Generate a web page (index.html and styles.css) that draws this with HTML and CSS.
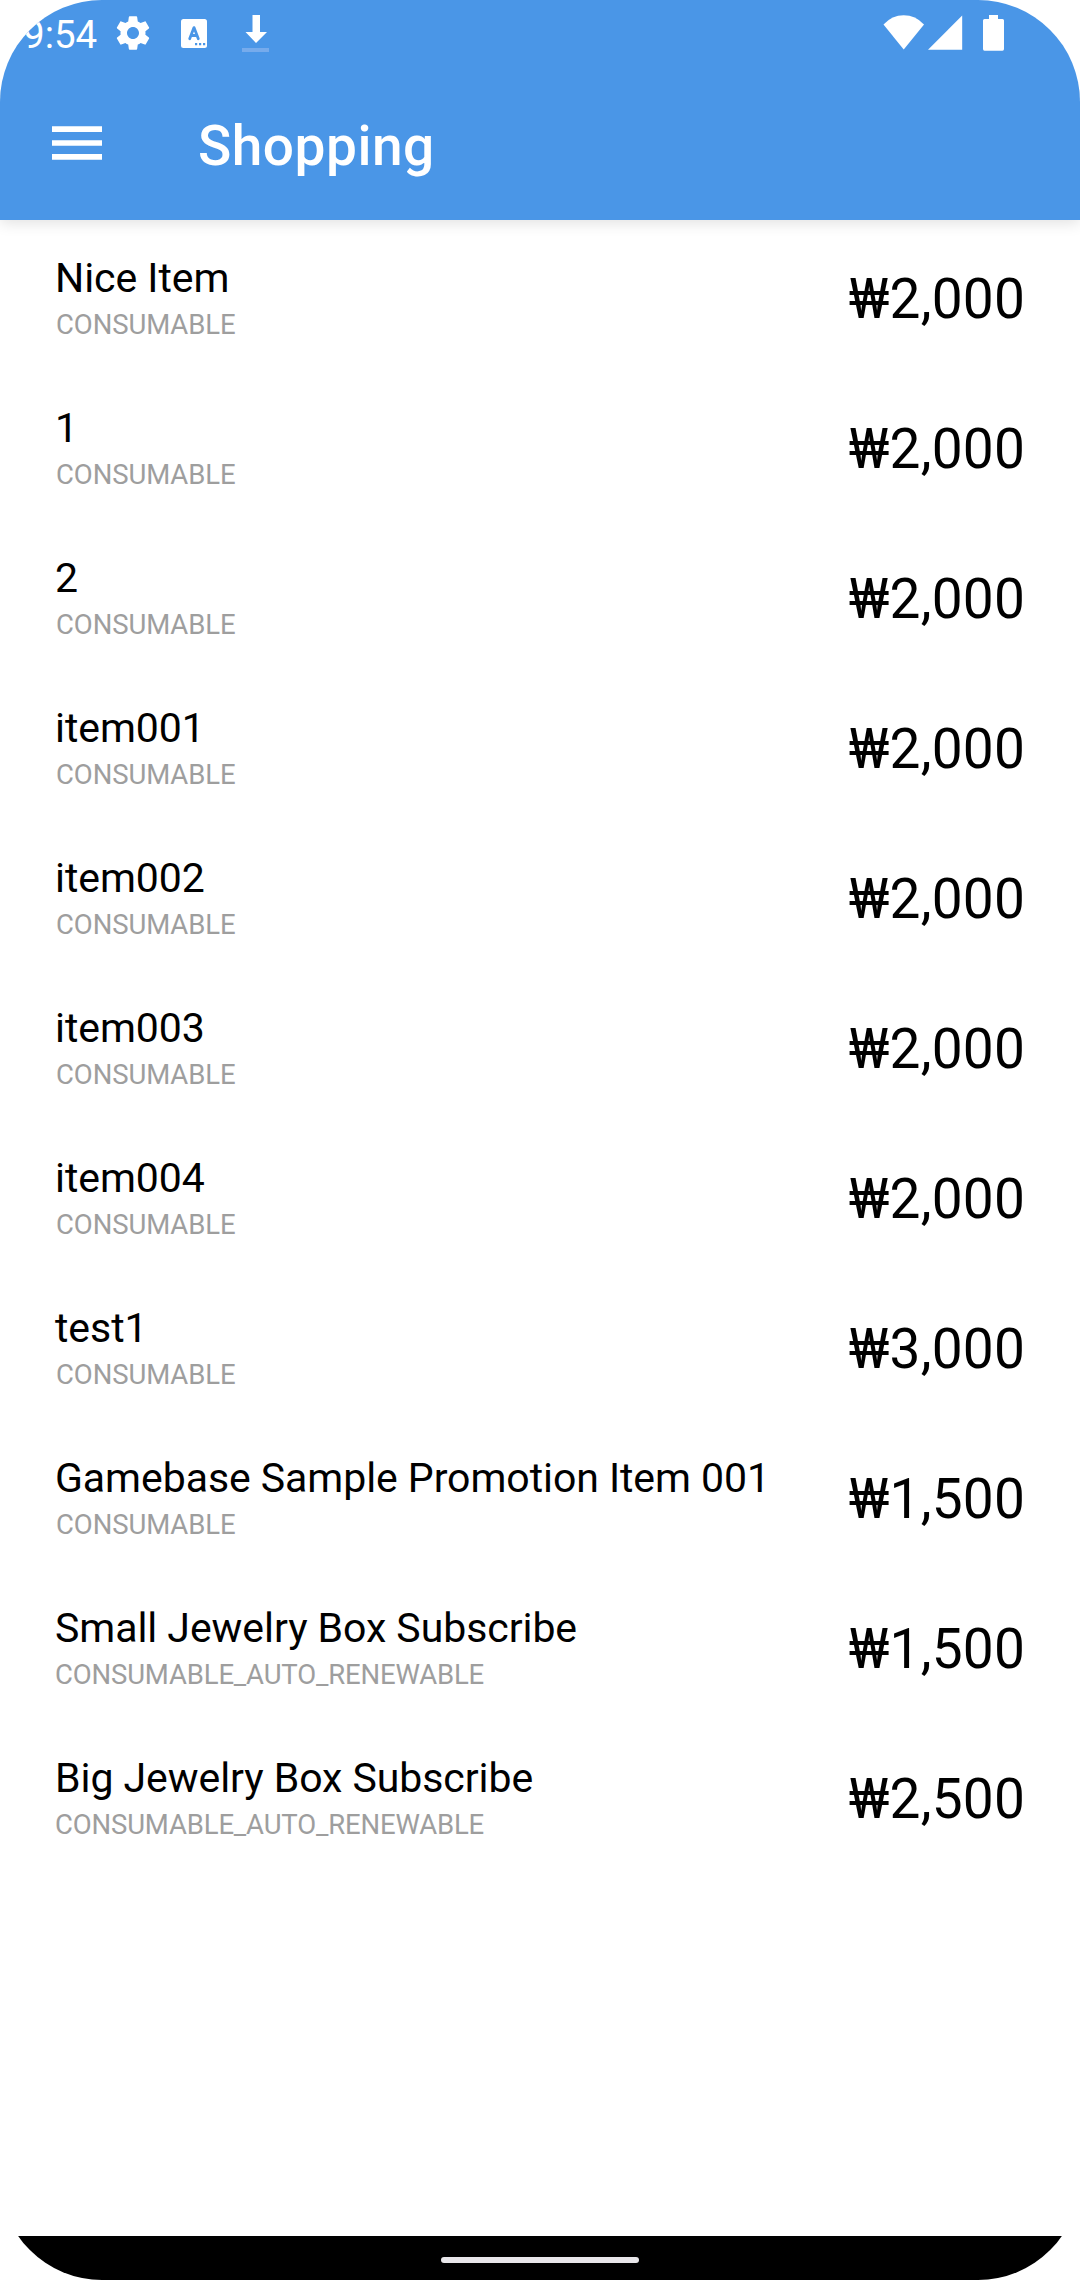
FILE: index.html
```
<!DOCTYPE html>
<html lang="en">
<head>
<meta charset="utf-8">
<title>Shopping</title>
<link rel="stylesheet" href="styles.css">
</head>
<body>
<div class="screen">
  <header class="header">
    <div class="status">
      <span class="clock">9:54</span>
      <svg class="gear" width="40" height="40" viewBox="0 0 24 24"><path fill="#fff" d="M19.43 12.98c.04-.32.07-.64.07-.98s-.03-.66-.07-.98l2.11-1.65c.19-.15.24-.42.12-.64l-2-3.46c-.12-.22-.39-.3-.61-.22l-2.49 1c-.52-.4-1.08-.73-1.69-.98l-.38-2.65C14.46 2.18 14.25 2 14 2h-4c-.25 0-.46.18-.49.42l-.38 2.65c-.61.25-1.17.59-1.69.98l-2.49-1c-.23-.09-.49 0-.61.22l-2 3.46c-.13.22-.07.49.12.64l2.11 1.65c-.04.32-.07.65-.07.98s.03.66.07.98l-2.11 1.65c-.19.15-.24.42-.12.64l2 3.46c.12.22.39.3.61.22l2.49-1c.52.4 1.08.73 1.69.98l.38 2.65c.03.24.24.42.49.42h4c.25 0 .46-.18.49-.42l.38-2.65c.61-.25 1.17-.59 1.69-.98l2.49 1c.23.09.49 0 .61-.22l2-3.46c.12-.22.07-.49-.12-.64l-2.11-1.65zM12 15.600c-1.980 0-3.600-1.620-3.600-3.600s1.620-3.600 3.600-3.600 3.600 1.620 3.600 3.600-1.620 3.600-3.600 3.600z"/></svg>
      <svg class="keyboard" width="26" height="29" viewBox="0 0 26 29"><rect width="26" height="29" rx="2.500" fill="#fff"/><path d="M8.700 19.800L13 8.600L17.300 19.800M10 16.500H16" fill="none" stroke="#4a96e7" stroke-width="2.800" stroke-linecap="round" stroke-linejoin="round"/><path d="M14 24h2.200v2.200H14zM18 24h2.200v2.200H18zM22 24h2.200v2.200H22z" fill="#4a96e7"/></svg>
      <svg class="download" width="28" height="38" viewBox="0 0 28 38"><path d="M10.500 0h7.500v17h7L14 28 3.500 17h7z" fill="#fff"/><path d="M0 33h27v4H0z" fill="#76abec"/></svg>
      <span class="spacer"></span>
      <svg class="wifi" width="42" height="36" viewBox="0 0 42 36"><path d="M0.500 9.500Q9 0.300 20.700 0.300Q32.500 0.300 41 9.500L20.700 34.500z" fill="#fff"/></svg>
      <svg class="signal" width="35" height="36" viewBox="0 0 35 36"><path d="M34.200 0.500v34.200H0z" fill="#fff"/></svg>
      <svg class="battery" width="21" height="36" viewBox="0 0 21 36"><path d="M6 0h9v4h4.500Q21 4 21 5.500V34Q21 35.700 19.500 35.700h-18Q0 35.700 0 34V5.500Q0 4 1.500 4H6z" fill="#fff"/></svg>
    </div>
    <div class="toolbar">
      <svg class="menu" width="50" height="34" viewBox="0 0 50 34"><path d="M0 .3h50v5.600H0zM0 14.200h50v5.600H0zM0 28h50v5.700H0z" fill="#fff"/></svg>
      <h1 class="title">Shopping</h1>
    </div>
  </header>
  <main class="list">
    <div class="row"><div class="info"><div class="name">Nice Item</div><div class="type">CONSUMABLE</div></div><div class="price">₩2,000</div></div>
    <div class="row"><div class="info"><div class="name">1</div><div class="type">CONSUMABLE</div></div><div class="price">₩2,000</div></div>
    <div class="row"><div class="info"><div class="name">2</div><div class="type">CONSUMABLE</div></div><div class="price">₩2,000</div></div>
    <div class="row"><div class="info"><div class="name">item001</div><div class="type">CONSUMABLE</div></div><div class="price">₩2,000</div></div>
    <div class="row"><div class="info"><div class="name">item002</div><div class="type">CONSUMABLE</div></div><div class="price">₩2,000</div></div>
    <div class="row"><div class="info"><div class="name">item003</div><div class="type">CONSUMABLE</div></div><div class="price">₩2,000</div></div>
    <div class="row"><div class="info"><div class="name">item004</div><div class="type">CONSUMABLE</div></div><div class="price">₩2,000</div></div>
    <div class="row"><div class="info"><div class="name">test1</div><div class="type">CONSUMABLE</div></div><div class="price">₩3,000</div></div>
    <div class="row"><div class="info"><div class="name">Gamebase Sample Promotion Item 001</div><div class="type">CONSUMABLE</div></div><div class="price">₩1,500</div></div>
    <div class="row"><div class="info"><div class="name">Small Jewelry Box Subscribe</div><div class="type renewable">CONSUMABLE_AUTO_RENEWABLE</div></div><div class="price">₩1,500</div></div>
    <div class="row"><div class="info"><div class="name">Big Jewelry Box Subscribe</div><div class="type renewable">CONSUMABLE_AUTO_RENEWABLE</div></div><div class="price">₩2,500</div></div>
  </main>
  <footer class="nav"><div class="handle"></div></footer>
</div>
</body>
</html>
```
FILE: styles.css
```
body {
  margin: 0;
  background: #fff;
  font-family: Roboto, "Noto Sans", sans-serif;
}

.screen {
  display: flex;
  flex-direction: column;
  height: 2280px;
  overflow: hidden;
  border-radius: 102px;
  background: #fff;
  color: #000;
}

.header {
  flex: none;
  height: 220px;
  background: #4a96e7;
  color: #fff;
  box-shadow: 0 3px 14px rgba(0, 0, 0, 0.12);
}

.status {
  display: flex;
  align-items: flex-start;
  height: 73px;
  padding: 0 76px 0 23px;
}

.clock {
  width: 90px;
  margin-top: 12px;
  font-size: 38.500px;
  line-height: 46px;
}

.gear { margin: 13px 0 0 0; }
.keyboard { margin: 19px 0 0 28px; }
.download { margin: 15px 0 0 35px; }
.spacer { flex: 1; }
.wifi { margin-top: 15px; }
.signal { margin: 15px 0 0 3px; }
.battery { margin: 15px 0 0 20px; }

.toolbar {
  display: flex;
  align-items: center;
  height: 147px;
  padding-left: 52px;
}

.menu { margin-top: -7px; }

.title {
  margin: -2px 0 0 96px;
  font-size: 55px;
  font-weight: 500;
  line-height: 64px;
  letter-spacing: 0.500px;
}

.list {
  flex: 1;
  padding-top: 4px;
}

.row {
  display: flex;
  align-items: center;
  justify-content: space-between;
  height: 150px;
  padding: 0 55px;
}

.info { margin-top: -2px; }

.name {
  font-size: 41px;
  line-height: 48px;
  letter-spacing: -0.060px;
  white-space: nowrap;
}

.type {
  margin-top: 6px;
  padding-left: 1px;
  font-size: 27.500px;
  line-height: 34px;
  letter-spacing: -0.080px;
  color: #9e9e9e;
}

.renewable {
  padding-left: 0;
  letter-spacing: -0.150px;
}

.price {
  font-size: 55px;
  line-height: 64px;
  letter-spacing: 0.200px;
}

.nav {
  display: flex;
  align-items: center;
  justify-content: center;
  height: 44px;
  background: #000;
}

.handle {
  width: 198px;
  height: 6px;
  margin-top: 4px;
  border-radius: 3px;
  background: #e8e6ea;
}
```
